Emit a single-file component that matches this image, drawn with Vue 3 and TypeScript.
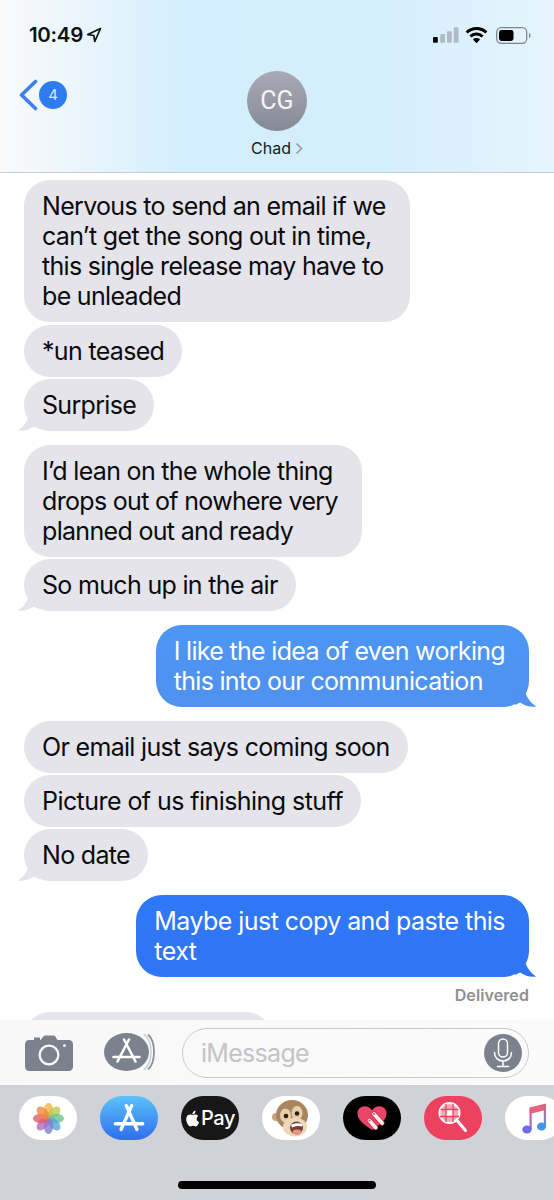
<template>
  <div class="phone">
    <!-- Header -->
    <header class="top">
      <div class="status">
        <div class="clock">
          <span>10:49</span>
          <svg width="16" height="16" viewBox="0 0 16 16" fill="none" stroke="#111" stroke-width="1.7" stroke-linejoin="round">
            <path d="M14.5 1.5 1.8 7.6l6 .9 1 6z" />
          </svg>
        </div>
        <div class="indicators">
          <svg class="signal" width="26" height="16" viewBox="0 0 27 16">
            <rect x="0" y="10" width="5" height="6" rx="1" fill="#000" />
            <rect x="7.5" y="7" width="5" height="9" rx="1" fill="#aebcc6" />
            <rect x="14.5" y="4" width="5" height="12" rx="1" fill="#aebcc6" />
            <rect x="21.5" y="0" width="5" height="16" rx="1" fill="#aebcc6" />
          </svg>
          <svg class="wifi" width="23" height="17" viewBox="0 0 23 17">
            <path d="M11.5 0C7.2 0 3.4 1.7.6 4.4l2.1 2.2a12.7 12.7 0 0 1 17.6 0l2.1-2.2A15.7 15.7 0 0 0 11.5 0Z" fill="#000" />
            <path d="M11.5 5.6c-2.8 0-5.3 1.1-7.1 2.8l2.1 2.2a7.3 7.3 0 0 1 10 0l2.1-2.2a10.2 10.2 0 0 0-7.1-2.8Z" fill="#000" />
            <path d="M11.5 11c-1.4 0-2.6.5-3.5 1.4l3.5 3.8 3.5-3.8c-.9-.9-2.100-1.400-3.500-1.400Z" fill="#000" />
          </svg>
          <svg class="battery" width="35" height="17" viewBox="0 0 35 17">
            <rect x=".7" y=".7" width="30" height="15.6" rx="4.5" fill="none" stroke="#7d8790" stroke-width="1.3" />
            <rect x="3" y="3" width="14.500" height="11" rx="2.400" fill="#000" />
            <path d="M33 6v5c1-.3 1.600-1.400 1.600-2.500S34 6.300 33 6Z" fill="#7d8790" />
          </svg>
        </div>
      </div>
      <div class="nav">
        <div class="back">
          <svg width="19" height="32" viewBox="0 0 19 32" fill="none" stroke="#3b80ee" stroke-width="3.600" stroke-linecap="round" stroke-linejoin="round">
            <path d="M16.500 2.500 2.500 16l14 13.500" />
          </svg>
          <span class="badge">4</span>
        </div>
        <div class="contact">
          <div class="avatar">CG</div>
          <div class="name">
            Chad
            <svg width="8" height="13" viewBox="0 0 8 13" fill="none" stroke="#8f979f" stroke-width="1.500">
              <path d="m1.500 1.500 5 5-5 5" />
            </svg>
          </div>
        </div>
      </div>
    </header>

    <!-- Messages -->
    <section class="thread">
      <div
        v-for="(msg, index) in messages"
        :key="index"
        class="bubble"
        :class="[
          msg.from,
          msg.tone,
          { multi: msg.lines.length > 1, 'new-group': msg.newGroup, loose: msg.loose }
        ]"
      >
        <span v-for="line in msg.lines" :key="line" class="line">{{ line }}</span>
        <svg v-if="msg.tail" class="tail" width="22" height="24" viewBox="0 0 22 24">
          <path d="M13 0C13 10 9 18 1 23.500c5 .8 11-.6 16-4L22 22V0Z" fill="currentColor" />
        </svg>
      </div>
      <div class="delivered">Delivered</div>
      <div class="bubble them last"><span class="line">&nbsp;</span></div>
    </section>

    <!-- Composer -->
    <div class="composer">
      <svg class="camera" width="48" height="36" viewBox="0 0 48 36">
        <path
          fill-rule="evenodd"
          fill="#7b818d"
          d="M4 5h5V2.500h6V5h.5l3-3.800c.4-.5 1-.8 1.600-.8h8.300c.7 0 1.300.3 1.700.9L32.500 5H44c2.200 0 4 1.800 4 4v23c0 2.200-1.800 4-4 4H4c-2.200 0-4-1.800-4-4V9c0-2.200 1.800-4 4-4Zm20 4.500a10.500 10.500 0 1 0 0 21 10.500 10.500 0 0 0 0-21Zm0 2.300a8.200 8.200 0 1 1 0 16.400 8.200 8.200 0 0 1 0-16.400ZM39.500 9a1.500 1.500 0 1 0 0 3 1.500 1.500 0 0 0 0-3Z"
        />
      </svg>
      <svg class="apps" width="52" height="38" viewBox="0 0 52 38">
        <path d="M44 1.500C48 5 50 11.500 50 19s-2 14-6 17.500" fill="none" stroke="#8b909a" stroke-width="1.800" />
        <path d="M40 1c4.500 4 7 10.500 7 18s-2.500 14-7 18" fill="none" stroke="#c9ccd2" stroke-width="1.500" />
        <ellipse cx="22.500" cy="19" rx="22.500" ry="19" fill="#7b818d" />
        <g stroke="#fff" stroke-width="2.600" stroke-linecap="round">
          <path d="M25 6.500 13.500 28.500" />
          <path d="M20 6.500 31.500 28.500" />
          <path d="M9.500 24h26" />
        </g>
      </svg>
      <div class="field">
        <span class="placeholder">iMessage</span>
        <span class="mic">
          <svg width="20" height="30" viewBox="0 0 20 30" fill="none" stroke="#fff" stroke-width="1.500" stroke-linecap="round">
            <rect x="5.500" y="1" width="9" height="18" rx="4.500" />
            <path d="M1.500 14.500c0 5 3.500 8.500 8.500 8.500s8.500-3.500 8.500-8.500M10 23v5M4.500 28.500h11" />
          </svg>
        </span>
      </div>
    </div>

    <!-- App tray -->
    <footer class="tray">
      <div class="apps-row">
        <div class="pill light">
          <svg width="31" height="31" viewBox="0 0 34 34">
            <ellipse
              v-for="(color, i) in petals"
              :key="color"
              cx="17"
              cy="8.500"
              rx="5.200"
              ry="8.500"
              :fill="color"
              fill-opacity="0.8"
              :transform="`rotate(${i * 45} 17 17)`"
            />
          </svg>
        </div>
        <div class="pill store">
          <svg width="32" height="30" viewBox="0 0 36 34" stroke="#fff" stroke-width="3.800" stroke-linecap="round" fill="none">
            <path d="M21 3 9 30" />
            <path d="M15 3 27 30" />
            <path d="M2.500 23.500h31" />
          </svg>
        </div>
        <div class="pill pay">
          <svg width="14" height="17" viewBox="0 0 14 17">
            <path fill="#fff" d="M11.600 9c0-1.900 1.500-2.800 1.600-2.900-.9-1.300-2.200-1.500-2.700-1.500-1.200-.1-2.300.7-2.900.7-.6 0-1.500-.7-2.500-.7C3.800 4.600 2.600 5.300 1.900 6.500.5 8.900 1.500 12.400 2.900 14.400c.7 1 1.500 2 2.500 2 1 0 1.400-.6 2.600-.6 1.200 0 1.500.6 2.600.6s1.800-1 2.400-2c.8-1.100 1.100-2.200 1.100-2.300 0 0-2.500-.9-2.500-3.100ZM9.700 3.300c.5-.7.900-1.600.8-2.500-.8 0-1.700.5-2.300 1.200-.5.600-.9 1.500-.8 2.400.9.100 1.800-.4 2.300-1.100Z" />
          </svg>
          <span>Pay</span>
        </div>
        <div class="pill light">
          <svg width="38" height="40" viewBox="0 0 38 40">
            <circle cx="4" cy="19" r="4" fill="#c9a67d" />
            <circle cx="4" cy="19" r="2.200" fill="#d99a8c" />
            <ellipse cx="20" cy="17" rx="16" ry="15" fill="#a8875f" />
            <ellipse cx="13.500" cy="17.500" rx="5.500" ry="7" fill="#e6cfa9" />
            <ellipse cx="25" cy="15" rx="5.500" ry="7" fill="#e6cfa9" />
            <circle cx="14" cy="18" r="2.300" fill="#2c1c12" />
            <circle cx="25" cy="15.500" r="2.300" fill="#2c1c12" />
            <ellipse cx="23" cy="29" rx="12" ry="9.500" fill="#ecd8b8" />
            <ellipse cx="24.500" cy="30" rx="6.500" ry="6.500" fill="#7c3f34" />
            <ellipse cx="25" cy="34" rx="4.500" ry="2.500" fill="#e6938c" />
            <path d="M19 27c3-2 8-2.500 11.500-1l-.5 2.500c-3-1-7-.6-10 1Z" fill="#fff" />
          </svg>
        </div>
        <div class="pill dark">
          <svg width="30" height="24" viewBox="0 0 30 24">
            <path fill="#ec4468" d="M15 24C6 18 .5 13.500 .5 7.300 .5 3.200 3.700 .3 7.600 .3c3 0 5.700 1.500 7.400 4 1.700-2.500 4.400-4 7.400-4 3.900 0 7.100 2.900 7.100 7 0 6.200-5.500 10.700-14.500 16.700Z" />
            <g stroke-linecap="round">
              <path d="m17 8 8 9" stroke="#b93250" stroke-width="5.200" />
              <path d="m17 8 8 9" stroke="#f6ece6" stroke-width="3.800" />
              <path d="m12.500 14.500 6 7" stroke="#b93250" stroke-width="5.200" />
              <path d="m12.500 14.500 6 7" stroke="#f6ece6" stroke-width="3.800" />
            </g>
            <circle cx="17" cy="8" r="1" fill="#ec4468" />
            <circle cx="12.500" cy="14.500" r="1" fill="#ec4468" />
          </svg>
        </div>
        <div class="pill search">
          <svg width="30" height="32" viewBox="0 0 30 32" fill="none">
            <circle cx="11.500" cy="11" r="10" fill="#f7a9b6" stroke="#fff" stroke-width="2" />
            <g stroke="#ec4260" stroke-width="1.300">
              <path d="M2.500 7.500h18M2 14.500h19M8 2v18M15 2v18" />
            </g>
            <rect x="8.800" y="8.300" width="5.400" height="5.400" fill="#fff" />
            <path d="m19.500 19 8 9.500" stroke="#fff" stroke-width="3" stroke-linecap="round" />
          </svg>
        </div>
        <div class="pill light">
          <svg width="25" height="31" viewBox="0 0 25 31">
            <defs>
              <linearGradient id="noteLeft" x1="0" y1="0" x2="0" y2="1">
                <stop offset="0" stop-color="#e8607c" />
                <stop offset="1" stop-color="#8d6ce0" />
              </linearGradient>
              <linearGradient id="noteRight" x1="0" y1="0" x2="0" y2="1">
                <stop offset="0" stop-color="#e8607c" />
                <stop offset="1" stop-color="#4f94e6" />
              </linearGradient>
            </defs>
            <path fill="#e8627e" d="M7.500 4.500 24 .5V7L9.500 10.500H7.500Z" />
            <path fill="url(#noteLeft)" d="M7.500 6h2.200v20H7.500Z" />
            <path fill="url(#noteRight)" d="M21.800 2H24v21h-2.200Z" />
            <ellipse cx="5" cy="26.500" rx="4.700" ry="4" fill="#6f68ea" />
            <ellipse cx="19.500" cy="23.500" rx="4.500" ry="4" fill="#4595e8" />
          </svg>
        </div>
      </div>
      <div class="home-bar"></div>
    </footer>
  </div>
</template>

<script setup lang="ts">
interface Message {
  lines: string[];
  from: 'them' | 'me';
  tone?: string;
  tail?: boolean;
  newGroup?: boolean;
  loose?: boolean;
}

const messages: Message[] = [
  {
    from: 'them',
    lines: [
      'Nervous to send an email if we',
      'can\u2019t get the song out in time,',
      'this single release may have to',
      'be unleaded'
    ]
  },
  { from: 'them', lines: ['*un teased'] },
  { from: 'them', lines: ['Surprise'], tail: true },
  {
    from: 'them',
    newGroup: true,
    lines: [
      'I\u2019d lean on the whole thing',
      'drops out of nowhere very',
      'planned out and ready'
    ]
  },
  { from: 'them', lines: ['So much up in the air'], tail: true },
  {
    from: 'me',
    tone: 'sky',
    tail: true,
    newGroup: true,
    lines: ['I like the idea of even working', 'this into our communication']
  },
  { from: 'them', newGroup: true, lines: ['Or email just says coming soon'] },
  { from: 'them', loose: true, lines: ['Picture of us finishing stuff'] },
  { from: 'them', lines: ['No date'], tail: true },
  {
    from: 'me',
    tone: 'deep',
    tail: true,
    newGroup: true,
    loose: true,
    lines: ['Maybe just copy and paste this', 'text']
  }
];

const petals = ['#f4b43c', '#b5cf4c', '#6fc18a', '#5aa5d8', '#7d7fd0', '#b16bb8', '#e2596b', '#ef8a3f'];
</script>

<style>
html,
body {
  margin: 0;
  background: #fff;
}
</style>

<style scoped>
.phone {
  width: 554px;
  height: 1200px;
  display: flex;
  flex-direction: column;
  overflow: hidden;
  background: #fff;
  color: #000;
  font-family: Inter, "Liberation Sans", sans-serif;
}

.top {
  height: 172px;
  flex-shrink: 0;
  border-bottom: 1px solid #c9ced2;
  background: linear-gradient(90deg, #fafafa 0%, #e6f4fc 18%, #d3eefe 34%, #d5eefd 70%, #e6f5fd 100%);
}

.status {
  height: 64px;
  display: flex;
  justify-content: space-between;
  align-items: flex-start;
  padding: 23px 23px 0 29px;
  box-sizing: border-box;
}

.clock {
  display: flex;
  align-items: center;
  gap: 3px;
  font-size: 20.500px;
  line-height: 24px;
  font-weight: 600;
  letter-spacing: -0.3px;
  color: #111;
}

.indicators {
  display: flex;
  align-items: center;
  gap: 8px;
  height: 24px;
}

.signal {
  margin-right: -2px;
}

.nav {
  position: relative;
  display: flex;
  justify-content: center;
}

.back {
  position: absolute;
  left: 19px;
  top: 15px;
  display: flex;
  align-items: center;
  gap: 1px;
}

.badge {
  width: 28px;
  height: 28px;
  border-radius: 50%;
  background: #2f7bf0;
  color: #dbe9fd;
  font-size: 15px;
  line-height: 28px;
  text-align: center;
}

.contact {
  display: flex;
  flex-direction: column;
  align-items: center;
  gap: 7px;
  margin-top: 7px;
}

.avatar {
  width: 60px;
  height: 60px;
  border-radius: 50%;
  background: linear-gradient(180deg, #a8abb5 0%, #868a94 100%);
  color: #f4f5f7;
  font-family: Roboto, sans-serif;
  font-size: 25px;
  line-height: 60px;
  text-align: center;
}

.name {
  display: flex;
  align-items: center;
  gap: 4px;
  font-size: 16px;
  line-height: 20px;
  color: #111c24;
}

.thread {
  flex: 1;
  min-height: 0;
  overflow: hidden;
  display: flex;
  flex-direction: column;
  align-items: flex-start;
  padding: 7px 25px 0 24px;
}

.bubble {
  position: relative;
  flex-shrink: 0;
  width: fit-content;
  padding: 11px 18px;
  margin-top: 2px;
  border-radius: 26px;
  font-size: 25px;
  line-height: 30px;
  letter-spacing: -0.68px;
}

.bubble:first-child {
  margin-top: 0;
  margin-bottom: 1px;
}

.bubble.multi {
  padding-right: 24px;
}

.bubble.new-group {
  margin-top: 14px;
}

.bubble.loose {
  letter-spacing: -0.56px;
}

.line {
  display: block;
  white-space: nowrap;
}

.them {
  background: #e4e4ea;
  color: #0b0b0d;
}

.me {
  align-self: flex-end;
  color: #fff;
}

.sky {
  background: linear-gradient(180deg, #4c96f6 0%, #4f91ee 100%);
}

.deep {
  background: linear-gradient(180deg, #2f78f7 0%, #2f76f5 100%);
}

.tail {
  position: absolute;
  bottom: 0;
  left: -7px;
  color: #e4e4ea;
}

.me .tail {
  left: auto;
  right: -8px;
  transform: scaleX(-1);
}

.sky .tail {
  color: #4f91ee;
}

.deep .tail {
  color: #2f76f5;
}

.delivered {
  align-self: flex-end;
  margin-top: 9px;
  font-size: 16px;
  line-height: 18px;
  font-weight: 600;
  letter-spacing: 0.1px;
  color: #8e8e93;
}

.bubble.last {
  width: 248px;
  box-sizing: border-box;
  margin-top: 8px;
}

.composer {
  height: 65px;
  flex-shrink: 0;
  box-sizing: border-box;
  display: flex;
  align-items: flex-start;
  padding: 8px 25px 0 25px;
  background: linear-gradient(90deg, #f8f8f9, #fbfbfc);
}

.camera {
  margin-top: 7px;
  flex-shrink: 0;
}

.apps {
  margin: 5px 0 0 31px;
  flex-shrink: 0;
}

.field {
  flex: 1;
  height: 50px;
  margin-left: 26px;
  box-sizing: border-box;
  display: flex;
  align-items: center;
  justify-content: space-between;
  padding: 0 6px 0 18px;
  border: 1.500px solid #c9c9cd;
  border-radius: 25px;
}

.placeholder {
  font-size: 25px;
  letter-spacing: -0.7px;
  color: #c4c4c7;
}

.mic {
  width: 38px;
  height: 38px;
  border-radius: 50%;
  background: #7b818d;
  display: flex;
  align-items: center;
  justify-content: center;
}

.tray {
  height: 115px;
  flex-shrink: 0;
  background: #d0d2d7;
  display: flex;
  flex-direction: column;
  padding-top: 11px;
  box-sizing: border-box;
}

.apps-row {
  display: flex;
  gap: 23px;
  padding-left: 19px;
  overflow: hidden;
}

.pill {
  width: 58px;
  height: 44px;
  flex-shrink: 0;
  border-radius: 22px;
  display: flex;
  align-items: center;
  justify-content: center;
  overflow: hidden;
}

.light {
  background: #fff;
}

.store {
  background: linear-gradient(180deg, #5ac2fb 0%, #2f6eee 100%);
}

.pay {
  background: #171717;
  color: #fff;
  gap: 2px;
  font-size: 20px;
  font-weight: 500;
  letter-spacing: -0.4px;
}

.dark {
  background: #000;
}

.search {
  background: #ec4260;
}

.home-bar {
  width: 198px;
  height: 8px;
  margin: 41px 0 0 178px;
  border-radius: 4px;
  background: #000;
}
</style>
